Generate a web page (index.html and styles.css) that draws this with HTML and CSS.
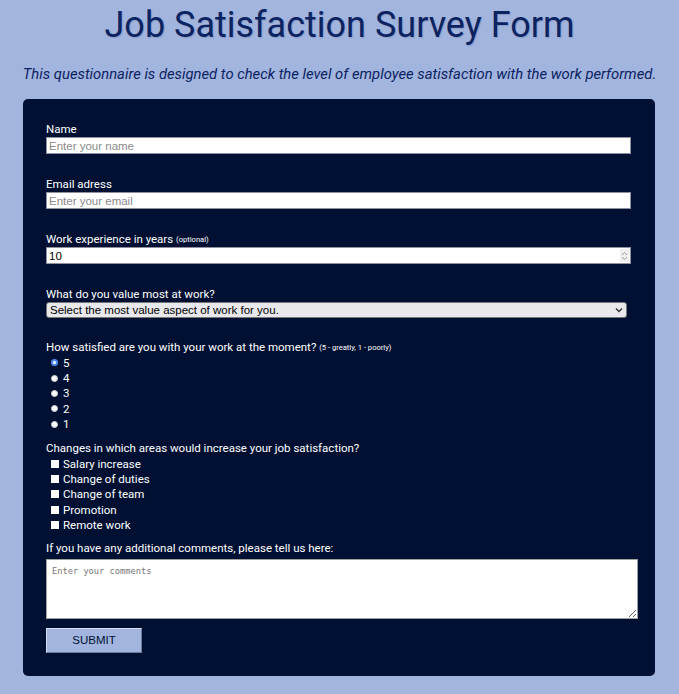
FILE: index.html
```html
<!DOCTYPE html>
<html lang="en">
<head>
<meta charset="utf-8">
<title>Job Satisfaction Survey Form</title>
<link rel="stylesheet" href="styles.css">
</head>
<body>
<h1 class="title">Job Satisfaction Survey Form</h1>
<p class="description">This questionnaire is designed to check the level of employee satisfaction with the work performed.</p>
<form class="survey">
  <div class="group">
    <label class="lbl" for="name">Name</label>
    <input class="field" id="name" type="text" placeholder="Enter your name">
  </div>
  <div class="group">
    <label class="lbl" for="email">Email adress</label>
    <input class="field" id="email" type="email" placeholder="Enter your email">
  </div>
  <div class="group">
    <label class="lbl" for="number">Work experience in years <span class="small">(optional)</span></label>
    <div class="num-wrap">
      <input class="field" id="number" type="text" value="10">
      <span class="spin"><svg width="7" height="10" viewBox="0 0 7 10"><path d="M1 4 L3.5 1.5 L6 4 M1 6 L3.5 8.5 L6 6" fill="none" stroke="#9a9a9a" stroke-width="1"/></svg></span>
    </div>
  </div>
  <div class="group">
    <label class="lbl" for="dropdown">What do you value most at work?</label>
    <div class="select">
      <span>Select the most value aspect of work for you.</span>
      <svg width="8" height="6" viewBox="0 0 8 6"><path d="M1 1.5 L4 4.5 L7 1.5" fill="none" stroke="#333" stroke-width="1.4"/></svg>
    </div>
  </div>
  <div class="choices">
    <p class="lbl">How satisfied are you with your work at the moment? <span class="small">(5 - greatly, 1 - poorly)</span></p>
    <label class="opt"><span class="radio checked"></span>5</label>
    <label class="opt"><span class="radio"></span>4</label>
    <label class="opt"><span class="radio"></span>3</label>
    <label class="opt"><span class="radio"></span>2</label>
    <label class="opt"><span class="radio"></span>1</label>
  </div>
  <div class="choices checks">
    <p class="lbl">Changes in which areas would increase your job satisfaction?</p>
    <label class="opt"><span class="check"></span>Salary increase</label>
    <label class="opt"><span class="check"></span>Change of duties</label>
    <label class="opt"><span class="check"></span>Change of team</label>
    <label class="opt"><span class="check"></span>Promotion</label>
    <label class="opt"><span class="check"></span>Remote work</label>
  </div>
  <div class="comments">
    <label class="lbl" for="comments">If you have any additional comments, please tell us here:</label>
    <textarea id="comments" class="area" placeholder="Enter your comments"></textarea>
  </div>
  <button type="button" class="submit">SUBMIT</button>
</form>
</body>
</html>
```
FILE: styles.css
```css
* { box-sizing: border-box; }
html, body { margin: 0; padding: 0; }
body {
  background: #a1b5df;
  font-family: Roboto, "Liberation Sans", sans-serif;
  color: #0c2361;
}
.title {
  margin: 0;
  padding-top: 4px;
  text-align: center;
  font-size: 36px;
  font-weight: 400;
  line-height: 42px;
  color: #0c2361;
  text-shadow: 1px 1px 1px rgba(0, 16, 51, 0.15);
}
.description {
  margin: 20px 0 0;
  text-align: center;
  font-style: italic;
  font-size: 14.8px;
  line-height: 17px;
}
.survey {
  margin: 16px 24px 20px 23px;
  background: #001033;
  border-radius: 5px;
  padding: 22px 17px 23px 23px;
  color: #ffffff;
}
.lbl {
  display: block;
  margin: 0;
  font-size: 11.5px;
  line-height: 16px;
  color: #ffffff;
}
.small {
  font-size: 7.6px;
  line-height: 0;
  vertical-align: 1px;
}
.group { margin-bottom: 22px; }
.field {
  display: block;
  width: 585px;
  height: 17px;
  margin: 0;
  padding: 0 2px;
  border: 1px solid #8f8f9d;
  border-radius: 0;
  background: #fff;
  font-family: "Liberation Sans", Arial, sans-serif;
  font-size: 11.5px;
  color: #000;
  outline: none;
}
.field::placeholder { color: #8a8a8a; }
.num-wrap { position: relative; width: 585px; }
.spin {
  position: absolute;
  right: 2px;
  top: 2px;
  width: 9px;
  height: 13px;
  background: #f0f0f0;
  display: flex;
  align-items: center;
  justify-content: center;
}
.select {
  display: flex;
  align-items: center;
  justify-content: space-between;
  width: 581px;
  height: 16px;
  padding: 0 3px 0 3px;
  border: 1px solid #767676;
  border-radius: 3px;
  background: #e9e9ed;
  font-family: "Liberation Sans", Arial, sans-serif;
  font-size: 11.5px;
  color: #000;
}
.choices { margin-bottom: 9px; }
.choices .lbl { line-height: 15px; }
.checks { margin-bottom: 7px; }
.opt {
  display: flex;
  align-items: center;
  height: 15.4px;
  padding-left: 5px;
  font-size: 11.5px;
  color: #fff;
}
.radio {
  width: 7px;
  height: 7px;
  margin-right: 5px;
  border-radius: 50%;
  background: #fff;
  border: 1px solid #d0d0d0;
}
.radio.checked {
  background: #fff;
  border: 2px solid #4a8df0;
}
.check {
  width: 8px;
  height: 8px;
  margin-right: 4px;
  background: #fff;
}
.comments { margin-bottom: 9px; }
.comments .lbl { margin-bottom: 3px; }
.area {
  display: block;
  width: 592px;
  height: 60px;
  margin: 0;
  padding: 6px 5px;
  border: 1px solid #a0a0a0;
  border-radius: 0;
  resize: both;
  font-family: "DejaVu Sans Mono", "Liberation Mono", monospace;
  font-size: 8.7px;
  color: #000;
  background: #fff;
}
.area::placeholder { color: #777; }
.submit {
  display: block;
  width: 96px;
  height: 25px;
  margin: 0;
  padding: 0;
  background: #a1b5df;
  border: 1px solid #d7dded;
  border-right-color: #6b7b9c;
  border-bottom-color: #6b7b9c;
  font-family: "Liberation Sans", Arial, sans-serif;
  font-size: 11.5px;
  color: #001033;
}
```
